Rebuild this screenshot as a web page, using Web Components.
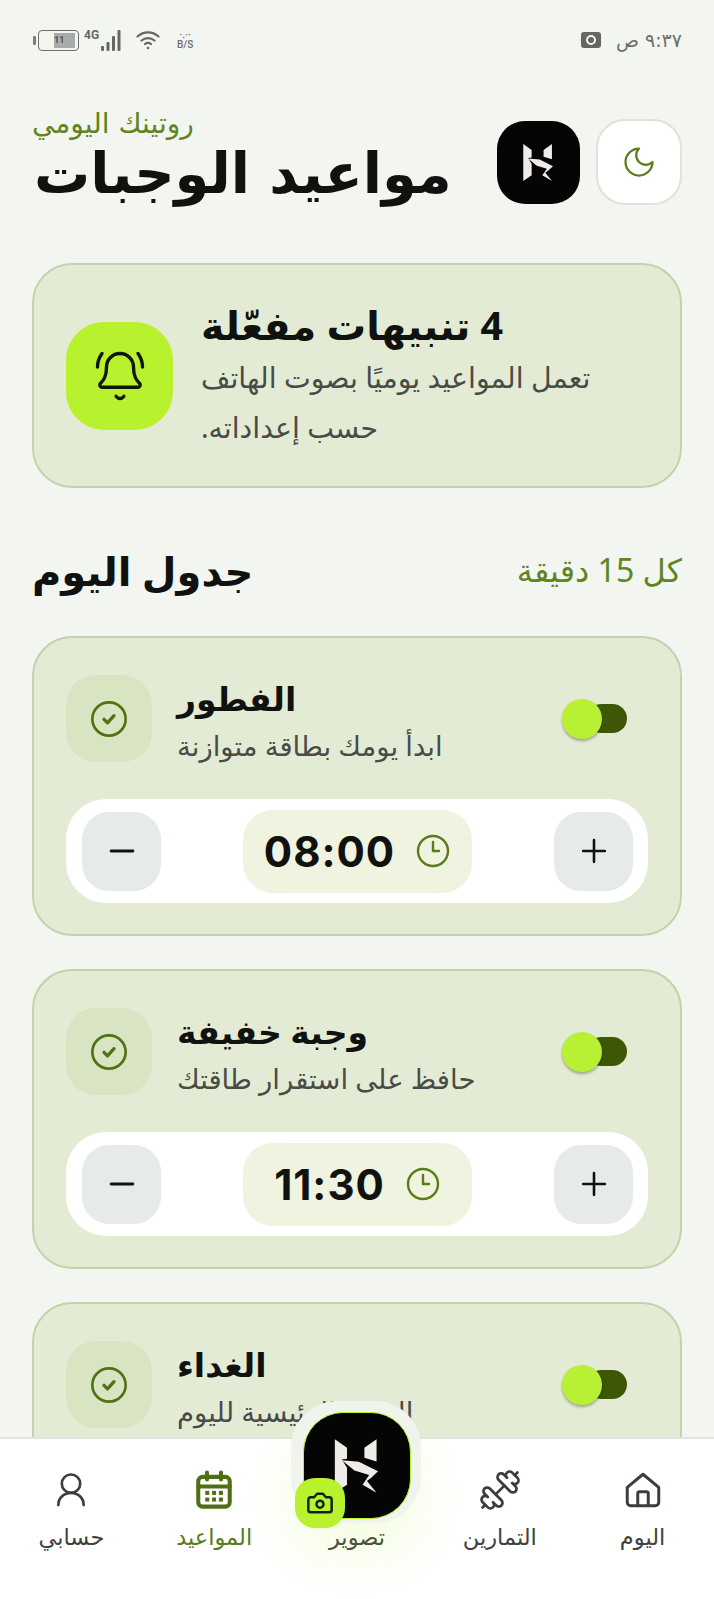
<!DOCTYPE html>
<html lang="ar">
<head>
<meta charset="utf-8">
<title>مواعيد الوجبات</title>
<style>
  html, body { margin: 0; height: 100%; background: #f3f5f1; }
  body { font-family: "Noto Sans", "DejaVu Sans", sans-serif; color: #101210; }
</style>
</head>
<body>
<app-screen>
  <status-bar slot="status"></status-bar>
  <page-header subtitle="روتينك اليومي" heading="مواعيد الوجبات"></page-header>
  <alert-card heading="4 تنبيهات مفعّلة" text="تعمل المواعيد يوميًا بصوت الهاتف حسب إعداداته."></alert-card>
  <section-head heading="جدول اليوم" note="كل 15 دقيقة"></section-head>
  <meal-card heading="الفطور" text="ابدأ يومك بطاقة متوازنة" time="08:00"></meal-card>
  <meal-card heading="وجبة خفيفة" text="حافظ على استقرار طاقتك" time="11:30"></meal-card>
  <meal-card heading="الغداء" text="الوجبة الرئيسية لليوم"></meal-card>
  <bottom-nav slot="nav"></bottom-nav>
</app-screen>

<script>
const ICONS = {
  moon: `<path d="M12 3a6 6 0 0 0 9 9 9 9 0 1 1-9-9Z"/>`,
  bell: `<path d="M10.268 21a2 2 0 0 0 3.464 0"/><path d="M22 8c0-2.3-.8-4.3-2-6"/><path d="M3.262 15.326A1 1 0 0 0 4 17h16a1 1 0 0 0 .74-1.673C19.41 13.956 18 12.499 18 8A6 6 0 0 0 6 8c0 4.499-1.411 5.956-2.738 7.326"/><path d="M4 2C2.8 3.7 2 5.7 2 8"/>`,
  check: `<circle cx="12" cy="12" r="10"/><path d="M9 12.200l2.100 2.100 3.900-4.300" stroke-width="2"/>`,
  clock: `<circle cx="12" cy="12" r="10"/><path d="M12 6v6h4"/>`,
  plus: `<path d="M12 2v20M2 12h20"/>`,
  minus: `<path d="M2 12h20"/>`,
  home: `<path d="M3 10.500 12 3l9 7.500V19a2 2 0 0 1-2 2H5a2 2 0 0 1-2-2Z"/><path d="M9 21v-7a1 1 0 0 1 1-1h4a1 1 0 0 1 1 1v7"/>`,
  dumbbell: `<path d="M17.596 12.768a2 2 0 1 0 2.829-2.829l-1.768-1.767a2 2 0 0 0 2.828-2.829l-2.828-2.828a2 2 0 0 0-2.829 2.828l-1.767-1.768a2 2 0 1 0-2.829 2.829z"/><path d="m2.500 21.500 1.400-1.400"/><path d="m20.100 3.900 1.400-1.400"/><path d="M5.343 21.485a2 2 0 1 0 2.829-2.828l1.767 1.768a2 2 0 1 0 2.829-2.829l-6.364-6.364a2 2 0 1 0-2.829 2.829l1.768 1.767a2 2 0 0 0-2.828 2.829z"/><path d="m9.600 14.400 4.800-4.800"/>`,
  calendar: `<rect x="3" y="4.500" width="18" height="17" rx="2.500"/><path d="M3 10h18"/><path d="M8 2v4M16 2v4"/><g fill="currentColor" stroke="none"><rect x="7" y="12.500" width="2.300" height="2.300"/><rect x="10.900" y="12.500" width="2.300" height="2.300"/><rect x="14.800" y="12.500" width="2.300" height="2.300"/><rect x="7" y="16.300" width="2.300" height="2.300"/><rect x="10.900" y="16.300" width="2.300" height="2.300"/><rect x="14.800" y="16.300" width="2.300" height="2.300"/></g>`,
  user: `<circle cx="12" cy="8" r="5.800"/><path d="M4 21.500c0-4.500 3.500-7.700 8-7.700s8 3.200 8 7.700"/>`,
  camera: `<path d="M14.500 4h-5L7 7H4a2 2 0 0 0-2 2v9a2 2 0 0 0 2 2h16a2 2 0 0 0 2-2V9a2 2 0 0 0-2-2h-3l-2.500-3z"/><circle cx="12" cy="13" r="3"/>`
};

class UiIcon extends HTMLElement {
  connectedCallback() {
    const size = this.getAttribute("size") || 24;
    const weight = this.getAttribute("weight") || 2;
    this.attachShadow({ mode: "open" }).innerHTML = `
    <style>
      :host { display: inline-flex; width: ${size}px; height: ${size}px; flex: none; }
      svg { width: 100%; height: 100%; fill: none; stroke: currentColor; stroke-width: ${weight}; stroke-linecap: round; stroke-linejoin: round; }
    </style>
    <svg viewBox="0 0 24 24">${ICONS[this.getAttribute("name")]}</svg>`;
  }
}
customElements.define("ui-icon", UiIcon);

class BrandLogo extends HTMLElement {
  connectedCallback() {
    this.attachShadow({ mode: "open" }).innerHTML = `
    <style>
      :host { display: block; width: 100%; height: 100%; }
      svg { display: block; width: 100%; height: 100%; }
    </style>
    <svg viewBox="0 0 130 155">
      <g fill="#efebe6">
        <path d="M5 5 38 28V58L24 60 38 82V128L5 150Z"/>
        <path d="M118 5V65L85 55V28Z"/>
        <path d="M24 62 70 66 122 92 105 108 92 118 118 150 80 128 98 102 58 90Z"/>
      </g>
    </svg>`;
  }
}
customElements.define("brand-logo", BrandLogo);

class AppScreen extends HTMLElement {
  connectedCallback() {
    this.attachShadow({ mode: "open" }).innerHTML = `
    <style>
      :host { display: flex; flex-direction: column; height: 100vh; overflow: hidden; }
      .top { flex: 1; min-height: 0; overflow: hidden; }
      main { padding: 0 32px; display: flex; flex-direction: column; }
    </style>
    <div class="top">
      <slot name="status"></slot>
      <main><slot></slot></main>
    </div>
    <slot name="nav"></slot>`;
  }
}
customElements.define("app-screen", AppScreen);

class StatusBar extends HTMLElement {
  connectedCallback() {
    this.attachShadow({ mode: "open" }).innerHTML = `
    <style>
      :host { display: flex; align-items: center; justify-content: space-between; height: 80px; padding: 0 32px 0 33px; box-sizing: border-box; color: #6c6e6c; font-family: "Roboto", sans-serif; }
      .side { display: flex; align-items: center; }
      .battery { display: flex; align-items: center; gap: 1px; }
      .nub { width: 3px; height: 9px; background: #7b7d7b; border-radius: 1px; }
      .cell { width: 41px; height: 21px; box-sizing: border-box; border: 1.500px solid #6c6e6c; border-radius: 4px; margin-left: 1px; padding: 2px 3px 2px 15px; display: flex; }
      .level { flex: 1; background: #a9aba9; font-size: 9px; line-height: 14px; font-weight: 700; color: #555; }
      .net { display: flex; flex-direction: column; align-items: center; margin-left: 17px; font-size: 10px; line-height: 10px; font-weight: 500; width: 16px; }
      .lte { font-size: 12px; line-height: 12px; font-weight: 700; margin: -10px 2px 0 5px; color: #666; }
      .wifi { margin-left: 15px; }
      .time { font-family: "DejaVu Sans", sans-serif; font-size: 19px; margin-left: 15px; direction: rtl; }
      .rec { width: 20px; height: 16px; background: #666; border-radius: 3px; display: flex; align-items: center; justify-content: center; }
      .rec i { width: 6px; height: 6px; border: 2.500px solid #f3f5f1; border-radius: 50%; }
    </style>
    <div class="side">
      <div class="battery"><span class="nub"></span><div class="cell"><div class="level">11</div></div></div>
      <span class="lte">4G</span>
      <svg width="20" height="22" viewBox="0 0 20 22" fill="#666"><rect x="0" y="17" width="3" height="5" rx="1"/><rect x="5.500" y="13" width="3" height="9" rx="1"/><rect x="11" y="7" width="3" height="15" rx="1"/><rect x="16.500" y="1" width="3" height="21" rx="1"/></svg>
      <svg class="wifi" width="24" height="20" viewBox="0 0 24 20" fill="none" stroke="#666" stroke-width="2.200" stroke-linecap="round"><path d="M1.500 6.500C7.500 1 16.500 1 22.500 6.500"/><path d="M5.500 10.500c3.800-3.300 9.200-3.300 13 0"/><path d="M9 14c1.800-1.400 4.200-1.400 6 0"/><circle cx="12" cy="18" r="1.300" fill="#666" stroke="none"/></svg>
      <div class="net"><span>·.··</span><span>B/S</span></div>
    </div>
    <div class="side">
      <span class="rec"><i></i></span>
      <span class="time">٩:٣٧ ص</span>
    </div>`;
  }
}
customElements.define("status-bar", StatusBar);

class PageHeader extends HTMLElement {
  connectedCallback() {
    this.attachShadow({ mode: "open" }).innerHTML = `
    <style>
      :host { display: flex; align-items: center; justify-content: space-between; height: 86px; margin-top: 39px; font-family: "DejaVu Sans", sans-serif; }
      .titles { margin-bottom: 5px; }
      .sub { color: #5f8420; font-size: 28px; line-height: 28px; }
      h1 { margin: 0 0 0 2px; font-size: 56px; line-height: 72px; font-weight: 700; color: #101210; white-space: nowrap; }
      .actions { display: flex; align-items: center; gap: 16px; }
      .logo { width: 83px; height: 83px; background: #050505; border-radius: 28px; box-sizing: border-box; padding: 21px 25px; }
      .theme { width: 86px; height: 86px; box-sizing: border-box; background: #fff; border: 2px solid #dfe3dc; border-radius: 29px; display: flex; align-items: center; justify-content: center; color: #5a7d1a; }
    </style>
    <div class="titles">
      <div class="sub">${this.getAttribute("subtitle")}</div>
      <h1>${this.getAttribute("heading")}</h1>
    </div>
    <div class="actions">
      <div class="logo"><brand-logo></brand-logo></div>
      <div class="theme"><ui-icon name="moon" size="36" weight="1.500"></ui-icon></div>
    </div>`;
  }
}
customElements.define("page-header", PageHeader);

class AlertCard extends HTMLElement {
  connectedCallback() {
    this.attachShadow({ mode: "open" }).innerHTML = `
    <style>
      :host { display: flex; align-items: center; gap: 28px; height: 225px; margin-top: 58px; box-sizing: border-box; padding: 0 32px; background: #e4ebd5; border: 2px solid #c6d1ac; border-radius: 40px; }
      .icon { width: 107px; height: 108px; flex: none; background: #b8f22e; border-radius: 38px; display: flex; align-items: center; justify-content: center; color: #10180a; }
      .copy { text-align: left; }
      h2 { margin: 0 0 2px; font-size: 39.500px; line-height: 50px; font-weight: 700; }
      p { margin: 0; max-width: 440px; font-size: 28.400px; line-height: 50px; color: #484b48; }
    </style>
    <div class="icon"><ui-icon name="bell" size="54" weight="1.500"></ui-icon></div>
    <div class="copy" dir="rtl">
      <h2>${this.getAttribute("heading")}</h2>
      <p>${this.getAttribute("text")}</p>
    </div>`;
  }
}
customElements.define("alert-card", AlertCard);

class SectionHead extends HTMLElement {
  connectedCallback() {
    this.attachShadow({ mode: "open" }).innerHTML = `
    <style>
      :host { display: flex; align-items: center; justify-content: space-between; height: 50px; margin: 60px 0 38px; }
      h2 { margin: 0 0 4px; font-size: 40px; font-weight: 700; line-height: 50px; }
      span { color: #5f8420; font-size: 32px; margin-bottom: 8px; }
    </style>
    <h2>${this.getAttribute("heading")}</h2>
    <span dir="rtl">${this.getAttribute("note")}</span>`;
  }
}
customElements.define("section-head", SectionHead);

class ToggleSwitch extends HTMLElement {
  connectedCallback() {
    this.attachShadow({ mode: "open" }).innerHTML = `
    <style>
      :host { display: flex; align-items: center; justify-content: flex-end; position: relative; width: 65px; height: 40px; flex: none; }
      .track { width: 40px; height: 29px; background: #3e5706; border-radius: 15px; }
      .thumb { position: absolute; left: 0; top: 0; width: 40px; height: 40px; border-radius: 50%; background: #b8f033; box-shadow: 0 2px 3px rgba(0,0,0,.3); }
    </style>
    <div class="track"></div>
    <div class="thumb"></div>`;
  }
}
customElements.define("toggle-switch", ToggleSwitch);

class TimeStepper extends HTMLElement {
  connectedCallback() {
    this.attachShadow({ mode: "open" }).innerHTML = `
    <style>
      :host { display: flex; align-items: center; justify-content: space-between; height: 104px; box-sizing: border-box; padding: 0 15px 0 16px; background: #fff; border-radius: 40px; }
      .step { width: 79px; height: 79px; background: #e6eae8; border-radius: 27px; display: flex; align-items: center; justify-content: center; color: #111; }
      .pill { width: 229px; height: 83px; background: #eff3e0; border-radius: 30px; display: flex; align-items: center; justify-content: center; gap: 20px; }
      b { font-family: "Inter", sans-serif; font-size: 42px; font-weight: 700; letter-spacing: 1px; color: #101210; }
      .clock { color: #5a7d1a; }
    </style>
    <div class="step"><ui-icon name="minus" size="26" weight="2.700"></ui-icon></div>
    <div class="pill"><b>${this.getAttribute("time")}</b><ui-icon class="clock" name="clock" size="36" weight="1.600"></ui-icon></div>
    <div class="step"><ui-icon name="plus" size="26" weight="2.400"></ui-icon></div>`;
  }
}
customElements.define("time-stepper", TimeStepper);

class MealCard extends HTMLElement {
  connectedCallback() {
    const time = this.getAttribute("time");
    this.attachShadow({ mode: "open" }).innerHTML = `
    <style>
      :host { display: block; box-sizing: border-box; height: 300px; margin-bottom: 33px; padding: 37px 32px 0; flex: none; background: #e4ebd5; border: 2px solid #c6d1ac; border-radius: 40px; }
      .row { display: flex; align-items: center; height: 87px; margin-bottom: 37px; }
      .icon { width: 86px; height: 87px; flex: none; background: #d9e4c2; border-radius: 30px; display: flex; align-items: center; justify-content: center; color: #4f7312; margin-right: 25px; }
      .text { flex: 1; padding-top: 5px; }
      h3 { margin: 0; font-size: 33px; line-height: 44px; font-weight: 700; }
      p { margin: 5px 0 0; font-size: 27.500px; line-height: 40px; color: #484b48; }
      toggle-switch { margin-right: 21px; }
    </style>
    <div class="row">
      <div class="icon"><ui-icon name="check" size="40" weight="1.600"></ui-icon></div>
      <div class="text">
        <h3>${this.getAttribute("heading")}</h3>
        <p>${this.getAttribute("text")}</p>
      </div>
      <toggle-switch></toggle-switch>
    </div>
    ${time ? `<time-stepper time="${time}"></time-stepper>` : ""}`;
  }
}
customElements.define("meal-card", MealCard);

class NavItem extends HTMLElement {
  connectedCallback() {
    const active = this.hasAttribute("active");
    this.attachShadow({ mode: "open" }).innerHTML = `
    <style>
      :host { display: flex; flex-direction: column; align-items: center; flex: 1; color: ${active ? "#4f6f12" : "#3b3f3c"}; }
      .slot { height: 40px; display: flex; align-items: center; justify-content: center; }
      span { margin-top: 12px; font-size: 22.500px; line-height: 30px; color: ${active ? "#5a7a1c" : "#3f4340"}; }
    </style>
    <div class="slot"><slot></slot></div>
    <span>${this.getAttribute("label")}</span>`;
  }
}
customElements.define("nav-item", NavItem);

class BottomNav extends HTMLElement {
  connectedCallback() {
    this.attachShadow({ mode: "open" }).innerHTML = `
    <style>
      :host { display: flex; flex: none; position: relative; height: 162px; box-sizing: border-box; padding: 31px 0 0; background: #fff; border-top: 2px solid #e1e5de; }
      .capture { position: absolute; left: 291px; top: -38px; width: 130px; height: 122px; box-sizing: border-box; padding: 11px 12px 0; background: #f1f4ed; border-radius: 46px; box-shadow: 0 34px 50px rgba(184,242,46,.14); }
      .mark { width: 106px; height: 105px; background: #050505; border: 1.500px solid #b8f22e; border-radius: 40px; display: flex; align-items: center; justify-content: center; }
      .mark div { width: 48px; height: 60px; }
      .badge { position: absolute; left: 4px; top: 77px; width: 50px; height: 50px; background: #b8f22e; border-radius: 20px; display: flex; align-items: center; justify-content: center; color: #10240f; }
    </style>
    <nav-item label="حسابي"><ui-icon name="user" size="38" weight="1.700"></ui-icon></nav-item>
    <nav-item label="المواعيد" active><ui-icon name="calendar" size="42" weight="2.300"></ui-icon></nav-item>
    <nav-item label="تصوير"></nav-item>
    <nav-item label="التمارين"><ui-icon name="dumbbell" size="44" weight="1.500"></ui-icon></nav-item>
    <nav-item label="اليوم"><ui-icon name="home" size="42" weight="1.700"></ui-icon></nav-item>
    <div class="capture">
      <div class="mark"><div><brand-logo></brand-logo></div></div>
      <div class="badge"><ui-icon name="camera" size="28" weight="2.100"></ui-icon></div>
    </div>`;
  }
}
customElements.define("bottom-nav", BottomNav);
</script>
</body>
</html>
